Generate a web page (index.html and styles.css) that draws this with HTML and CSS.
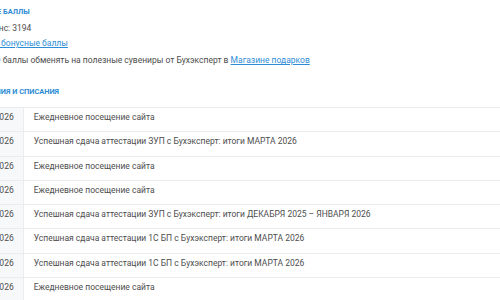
FILE: index.html
```html
<!DOCTYPE html>
<html lang="ru">
<head>
<meta charset="utf-8">
<title>Бонусные баллы</title>
<link rel="stylesheet" href="styles.css">
</head>
<body>
<div class="wrap">
  <h2 class="title">Бонусные баллы</h2>
  <p class="line">Ваш баланс: 3194</p>
  <p class="line"><a href="#" class="link">Получить бонусные баллы</a></p>
  <p class="line para">Бонусные баллы обменять на полезные сувениры от Бухэксперт в <a href="#" class="link">Магазине подарков</a></p>
  <h2 class="title section">Начисления и списания</h2>
  <table class="history">
    <tbody>
      <tr><td class="date">01.04.2026</td><td class="desc">Ежедневное посещение сайта</td></tr>
      <tr><td class="date">31.03.2026</td><td class="desc">Успешная сдача аттестации ЗУП с Бухэксперт: итоги МАРТА 2026</td></tr>
      <tr><td class="date">30.03.2026</td><td class="desc">Ежедневное посещение сайта</td></tr>
      <tr><td class="date">27.03.2026</td><td class="desc">Ежедневное посещение сайта</td></tr>
      <tr><td class="date">26.03.2026</td><td class="desc">Успешная сдача аттестации ЗУП с Бухэксперт: итоги ДЕКАБРЯ 2025 – ЯНВАРЯ 2026</td></tr>
      <tr><td class="date">26.03.2026</td><td class="desc">Успешная сдача аттестации 1С БП с Бухэксперт: итоги МАРТА 2026</td></tr>
      <tr><td class="date">25.03.2026</td><td class="desc">Успешная сдача аттестации 1С БП с Бухэксперт: итоги МАРТА 2026</td></tr>
      <tr><td class="date">24.03.2026</td><td class="desc">Ежедневное посещение сайта</td></tr>
    </tbody>
  </table>
</div>
</body>
</html>
```
FILE: styles.css
```css
html, body {
  margin: 0;
  padding: 0;
  background: #ffffff;
  overflow: hidden;
}
body {
  font-family: Roboto, "Noto Sans", Arial, sans-serif;
  font-size: 8.5px;
  color: #4d4d4d;
}
.wrap {
  margin-left: -39px;
  padding-top: 5px;
}
.title {
  margin: 0;
  font-size: 7.4px;
  line-height: 14px;
  font-weight: 700;
  text-transform: uppercase;
  color: #2e8bd6;
  white-space: nowrap;
}
.line {
  margin: 2px 0 0;
  line-height: 15px;
  white-space: nowrap;
}
.line + .line {
  margin-top: 0;
}
.para {
  margin-top: 2px !important;
}
.link {
  color: #2e8dd6;
  text-decoration: underline;
}
.section {
  margin-top: 17px;
}
.history {
  margin-top: 8px;
  width: calc(100% + 39px);
  border-collapse: collapse;
}
.history td {
  border-top: 1px solid #ececec;
  height: 24.3px;
  padding: 3px 0 0;
  line-height: 12px;
  vertical-align: top;
  white-space: nowrap;
  box-sizing: border-box;
}
.history td.date {
  width: 48px;
  padding-left: 10px;
  padding-right: 9px;
  background: #f7f8f9;
  border-right: 1px solid #ececec;
}
.history td.desc {
  padding-left: 10px;
}
```
